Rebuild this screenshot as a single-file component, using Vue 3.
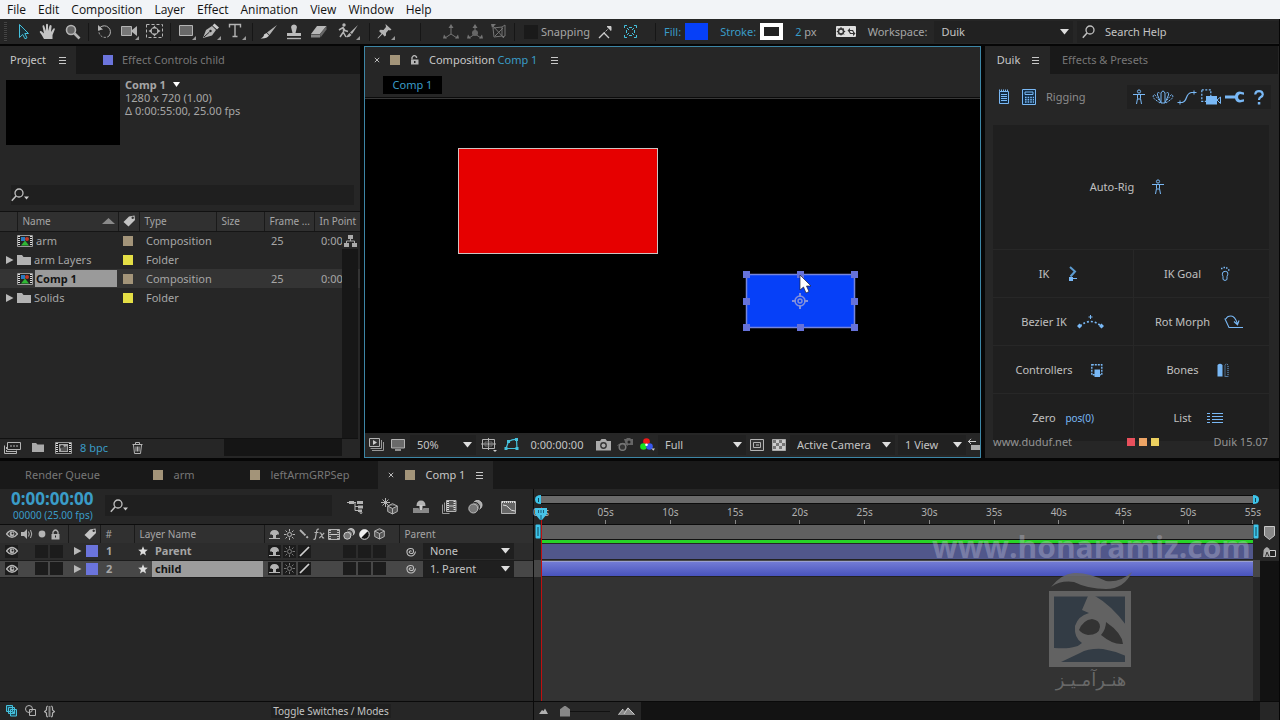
<script setup>
import { h, ref } from 'vue'

const G = '#b4b4b4'
const B = '#79b8f5'
const C = '#45c1dd'
const man = `<g fill="none" stroke="${B}"><circle cx="7" cy="2.500" r="1.600"/><path d="M1 5.500h12M5.500 5.500v4l-1 5.500M8.500 5.500v4l1 5.500M5.500 10h3"/></g>`
const eye = `<path d="M.5 5Q6 -2 11.500 5Q6 11.500.5 5z" fill="none" stroke="${G}" stroke-width="1.300"/><circle cx="6" cy="5" r="2.400" fill="${G}"/><circle cx="6.500" cy="4.500" r="1" fill="#222"/>`
const shy = `<path d="M1 5.500Q1 1 5.500 1T10 5.500zM4 5h3v5H4z" fill="${G}"/><path d="M0 9.500h11M3.500 4v2M7.500 4v2" stroke="${G}" fill="none"/>`
const cube = `<path d="M5.500.7l4.800 2.300v5.500l-4.800 2.500L.7 8.500V3zM.7 3l4.800 2.500L10.300 3M5.500 5.500V11" fill="#555" stroke="${G}"/>`
const balls = `<circle cx="8" cy="4" r="3.500" fill="#aaa" stroke="#ccc"/><circle cx="6" cy="6" r="3.500" fill="#888" stroke="#222"/><circle cx="4.300" cy="7.700" r="3.500" fill="#777" stroke="#ccc"/>`

const icons = {
  arrow: [14, 17, `<path d="M3.500 1.500v13l3.200-3 2.300 4.300 2-1-2.200-4.300h3.700z" fill="#1b3038" stroke="${C}"/>`],
  hand: [18, 17, `<path d="M5 16Q3 12 .8 9.300Q.5 7.500 2.500 8.200L5 10.500 3.500 3.500Q3.500 1.800 5 2.300L7 8V1.500Q8 .2 9 1.500V8l1.600-5.500Q12 1.300 12.600 3L12 9l2.400-3.500q1.800-.6 1.400 1L13.500 12v4z" fill="#c4c4c4"/>`],
  zoom: [16, 16, `<circle cx="6" cy="6" r="4.500" fill="#666" stroke="${G}" stroke-width="1.600"/><path d="M9.500 9.500l5 5" stroke="${G}" stroke-width="2.600"/>`],
  rotate: [15, 15, `<path d="M3 3.500a6.200 6.200 0 0 1 9 8.500" fill="none" stroke="${G}"/><path d="M12 12a6.200 6.200 0 0 1-10-6" fill="none" stroke="${G}" stroke-dasharray="2 1.500"/><path d="M1 1v5.500l5-1z" fill="${G}"/>`],
  camera: [19, 17, `<path d="M1.500 3.500h10v9h-10z" fill="#777" stroke="${G}"/><path d="M12 7l5-4v10l-5-4z" fill="${G}"/><path d="M19 13v4h-4z" fill="#999"/>`],
  panBehind: [17, 15, `<path d="M.5.5h16v13H.5z" fill="none" stroke="${G}" stroke-dasharray="3 2"/><circle cx="8.500" cy="7" r="3.500" fill="none" stroke="${G}"/><path d="M8.500 1.500l2 3h-4zM8.500 12.500l2-3h-4zM2.500 7l3-2v4zM14.500 7l-3-2v4z" fill="${G}"/>`],
  rect: [18, 17, `<path d="M1.500 2.500h13v10h-13z" fill="#696969" stroke="${G}"/><path d="M18 13v4h-4z" fill="#999"/>`],
  pen: [18, 17, `<path d="M0 15L3 7l6-4 4 4-4 5.500z" fill="${G}"/><path d="M9.500 2.500l2-2 4.500 4-2 2z" fill="#ccc"/><path d="M1 14l5.500-5" stroke="#222"/><circle cx="7.500" cy="8" r="1.200" fill="#222"/><path d="M18 13v4h-4z" fill="#999"/>`],
  type: [18, 17, `<path d="M1.500 4.500V1.500h11v3M7 2v11M4.500 13.500h5" fill="none" stroke="${G}" stroke-width="1.400"/><path d="M18 13v4h-4z" fill="#999"/>`],
  brush: [18, 16, `<path d="M17 1L9.500 11 7 8.500z" fill="${G}"/><path d="M6.500 9l2.500 2.500Q7 15 .5 14.500Q4 13 4 10.500z" fill="#ccc"/>`],
  stamp: [16, 16, `<path d="M5.500 5Q4 1 8 .5Q12 1 10.500 5L9.500 9H15v3H1V9h5.500z" fill="#bbb"/><path d="M1 14.500h14" stroke="${G}" stroke-width="1.400"/>`],
  eraser: [18, 15, `<path d="M7 2h9.500L10 10H1z" fill="#b8b8b8"/><path d="M1 10.500h9v3H1z" fill="#888"/><path d="M10 10l6.500-8v3.500l-6 8z" fill="#666"/>`],
  roto: [22, 17, `<circle cx="6" cy="2" r="1.700" fill="${G}"/><path d="M1 7l4-2.500 2 3 3 1M5.500 5v4.500L8 14M5 9.500L2 14" fill="none" stroke="${G}" stroke-width="1.500"/><path d="M20 2l-6 9-2-1.500zM11.500 10l2 2Q11 15 8 14z" fill="${G}"/><path d="M22 13v4h-4z" fill="#999"/>`],
  pin: [18, 17, `<path d="M8.500 1l6 5.500-1.500 1-1.500-.5-2.500 3v2.500L7.500 13.500 5.500 11 1 15.500.5 15 4.500 10.500 2 8l1.500-1.200 3 .2 2.500-3z" fill="${G}"/><path d="M18 13v4h-4z" fill="#999"/>`],
  axis1: [16, 16, `<path d="M8 2v8M8 10l-6 4M8 10l6 4" stroke="#747474" fill="none"/><path d="M8 0l2.500 4h-5zM0 14.500l1-4 3 4zM16 14.500l-1-4-3 4z" fill="#747474"/>`],
  axis2: [16, 16, `<path d="M8 2v8M8 10l-6 4M8 10l6 4" stroke="#747474" fill="none"/><path d="M8 0l2.500 4h-5zM0 14.500l1-4 3 4zM16 14.500l-1-4-3 4z" fill="#747474"/><circle cx="8" cy="9" r="3" fill="#666"/>`],
  axis3: [16, 16, `<path d="M2 4l9-1v9l-8 1zM1 1l12 13M11 3l3-2v11l-3 1M4 12l8-8" stroke="#747474" fill="none"/><path d="M0 0h5L1 4z" fill="#747474"/>`],
  snapA: [14, 14, `<path d="M1 13l5-5 5 5" stroke="#ccc" stroke-width="1.300" fill="none"/><path d="M6 8l4-4" stroke="#bbb" stroke-dasharray="2 1"/><path d="M9 2h4v4z" fill="#ccc"/><path d="M9 1.500h4v4" stroke="#ccc" fill="none"/>`],
  snapB: [13, 13, `<path d="M.5 3V.5H3M10 .5h2.500V3M.5 10v2.500H3M10 12.500h2.500V10M3 3l2 2M10 3L8 5M3 10l2-2M10 10L8 8M5 2.500h3M5 10.500h3M2.500 5v3M10.500 5v3" stroke="${C}" fill="none"/>`],
  gear: [20, 11, `<rect width="20" height="11" rx="1" fill="#dedede"/><circle cx="5" cy="5.500" r="2.600" fill="none" stroke="#333" stroke-width="1.600"/><path d="M5 1v9M.8 5.500h8.400M2 2.500l6 6M8 2.500l-6 6" stroke="#333" stroke-dasharray="1.500 5.500"/><path d="M14 2L11.500 4.500 14 7zM17 5l2.500 2.500L17 10z" fill="#333"/><path d="M13 4.500h4v1.500M18 7.500h-4V6" fill="none" stroke="#333"/>`],
  mag: [14, 14, `<circle cx="8" cy="5" r="4" fill="none" stroke="#c0c0c0" stroke-width="1.300"/><path d="M5 8L.8 12.800" stroke="#c0c0c0" stroke-width="1.500"/>`],
  magDrop: [19, 14, `<circle cx="8" cy="5" r="4" fill="none" stroke="#c0c0c0" stroke-width="1.300"/><path d="M5 8L.8 12.800" stroke="#c0c0c0" stroke-width="1.500"/><path d="M13 8.500h5l-2.500 3z" fill="#ccc"/>`],
  menu: [7, 8, `<path d="M0 1.500h7M0 4.500h7M0 7.500h7" stroke="#c8c8c8"/>`],
  close: [6, 6, `<path d="M.8.8l4.400 4.400M5.200.8L.8 5.200" stroke="#bbb"/>`],
  lock: [9, 10, `<path d="M2 4.500V2.500Q4 -1 6.500 2v1" fill="none" stroke="${G}" stroke-width="1.400"/><path d="M1 4.500h7.500v5H1z" fill="${G}"/><path d="M4 6h1.500v2H4z" fill="#222"/>`],
  locked: [9, 11, `<path d="M2 5V3Q4.500 -1 7 3v2" fill="none" stroke="${G}" stroke-width="1.300"/><path d="M.5 5h8v5.500h-8z" fill="${G}"/><path d="M4 6.500h1v2H4z" fill="#222"/>`],
  down: [9, 6, `<path d="M0 0h9L4.500 5.500z" fill="#ddd"/>`],
  downSmall: [7, 5, `<path d="M0 0h7L3.500 5z" fill="#fff"/>`],
  up: [13, 6, `<path d="M0 6h13L6.500 0z" fill="#8a8a8a"/>`],
  twirl: [8, 8, `<path d="M0 0l7.500 4L0 8z" fill="#b8b8b8"/>`],
  tag: [13, 12, `<path d="M6 1.500L11.500.5 12 5 5.500 11.500.5 7z" fill="#c4c4c4"/><circle cx="9.700" cy="2.800" r="1.200" fill="#333"/>`],
  comp: [16, 12, `<path d="M.5.5h15v11H.5z" fill="#222" stroke="#999"/><path d="M2 1v10M14 1v10" stroke="#ddd" stroke-width="2" stroke-dasharray="1 1"/><path d="M4 2h4v4H4z" fill="#2a7abf"/><circle cx="10" cy="4" r="2" fill="#c03a2a"/><path d="M4 10.500h8L8 5.500z" fill="#2fb835"/>`],
  folder: [14, 11, `<path d="M0 1h5l1.500 2H14v8H0z" fill="#b2b2b2"/>`],
  folderSmall: [12, 9, `<path d="M0 0h4l1.500 1.500H12V9H0z" fill="#aaa"/>`],
  flow: [13, 12, `<path d="M4 0h5v4H4zM0 8h5v4H0zM8 8h5v4H8z" fill="#aaa"/><path d="M6.500 4v2M2.500 8V6h8v2" fill="none" stroke="#aaa"/>`],
  interpret: [17, 12, `<path d="M3.500.5h13v7h-13z" fill="#222" stroke="${G}"/><path d="M.5 3.500v8h12v-3" fill="none" stroke="${G}"/><path d="M6 4h8M2.500 5v6" stroke="${G}" stroke-dasharray="2 1"/><path d="M3 9.500h9" stroke="${G}"/>`],
  newcomp: [17, 12, `<path d="M.5.5h16v11H.5z" fill="#222" stroke="#999"/><path d="M2 1v10M15 1v10" stroke="#ddd" stroke-width="2" stroke-dasharray="1 1"/><path d="M4 2h9v8H4z" fill="#aaa"/><circle cx="7" cy="5" r="2" fill="#333"/><path d="M6 9V6l6-2v5z" fill="#555"/>`],
  trash: [11, 12, `<path d="M.5 2.500h10M3.500 2V.5h4V2M1.500 3l1 8.500h6l1-8.500M4 4.500v5M5.500 4.500v5M7 4.500v5" fill="none" stroke="${G}"/>`],
  preview: [15, 13, `<path d="M3 12.500h11.500V4M1.500 10.500h11V2" fill="none" stroke="#999"/><path d="M.5.500h10v8H.5z" fill="#333" stroke="${G}"/><path d="M4 2l4 2.500L4 7z" fill="#ccc"/>`],
  monitor: [15, 12, `<path d="M.5.500h13v8.500H.5z" fill="#6a6a6a" stroke="${G}"/><path d="M4 11h6" stroke="${G}" stroke-width="1.500"/>`],
  safe: [16, 14, `<path d="M1.500 1.500h12v9h-12zM7.500 0v12M0 6h15" fill="none" stroke="${G}"/><path d="M4 4h7v4H4z" fill="none" stroke="#777"/><path d="M12 12h4l-2 2z" fill="#ccc"/>`],
  mask: [15, 13, `<path d="M2 10.500L4.500 3.500Q9 1 12.500 1.500L13 10.500z" fill="none" stroke="${C}" stroke-width="1.200"/><path d="M.5 9h3v3h-3zM11.500 9h3v3h-3zM3 2h3v3H3zM11 0h3v3h-3z" fill="${C}"/>`],
  snapshot: [15, 12, `<path d="M0 2h4l1.500-2h4L11 2h4v9.500H0z" fill="#aaa"/><circle cx="7.500" cy="6.500" r="3.400" fill="#333"/><circle cx="7.500" cy="6.500" r="2" fill="#aaa"/>`],
  showSnap: [16, 13, `<path d="M7 1h2l1-1h3l1 1h2v6H9z" fill="#666"/><circle cx="12" cy="4" r="1.500" fill="#222"/><path d="M.5 7.500Q6 3 11 7.500" fill="none" stroke="#666"/><circle cx="5.500" cy="9" r="3.300" fill="#333" stroke="#777" stroke-width="1.500"/>`],
  rgb: [15, 13, `<circle cx="6.500" cy="3.500" r="3.300" fill="#f01818"/><circle cx="3.500" cy="8.500" r="3.300" fill="#18e020"/><circle cx="9.500" cy="8.500" r="3.300" fill="#3858f0"/><circle cx="6.500" cy="6.800" r="1.300" fill="#fff"/><path d="M11.500 10.500h3.500l-1.700 2.300z" fill="#ccc"/>`],
  roi: [14, 12, `<path d="M.5.500h13v11H.5zM3.500 3.500h7v5h-7z" fill="#333" stroke="${G}"/><path d="M6 5h3v2H6z" fill="#777"/>`],
  grid: [14, 12, `<path d="M.5.500h13v11H.5z" fill="#ccc" stroke="#aaa"/><path d="M1 1h3v3H1zM7 1h3v3H7zM4 4h3v3H4zM10 4h3v3h-3zM1 7h3v3H1zM7 7h3v3H7z" fill="#777"/>`],
  pixel: [12, 14, `<path d="M0 3.500h8M3 .8L.5 3.500 3 6" fill="none" stroke="#ccc"/><path d="M3 7h9v5H3z" fill="#aaa"/>`],
  note: [12, 16, `<path d="M1.500 2.500h9v12h-9z" fill="#122c44" stroke="${B}"/><path d="M1 1.500h10" stroke="${B}" stroke-width="2" stroke-dasharray="1 1"/><path d="M3 5.500h6M3 7.500h6M3 9.500h6M3 11.500h6" stroke="${B}"/>`],
  calc: [14, 16, `<path d="M.500.500h13v15H.500z" fill="#122c44" stroke="${B}"/><path d="M3 3h8v2.500H3z" fill="none" stroke="${B}"/><path d="M3 8.500h9M3 10.800h9M3 13h9" stroke="${B}" stroke-width="1.600" stroke-dasharray="1.600 1"/>`],
  man: [14, 16, man],
  wings: [22, 15, `<g fill="none" stroke="${B}"><path d="M9 13V3q2-4 4 0v10z"/><path d="M9 13L5.500 5Q5 1.500 7.500 3M13 13l3.500-8Q17 1.500 14.500 3"/><path d="M8 13L3 9.500Q-.5 6 2.500 4.500L7 10M14 13l5-3.500Q22.500 6 19.500 4.500L15 10" stroke-dasharray="2 1"/></g>`],
  curve: [20, 15, `<path d="M3 12.500h2q3-.5 4.500-5t5-5h2" fill="none" stroke="${B}" stroke-width="1.200"/><path d="M.5 12.500h5M3 10.500v4M14 2.500h5.500M17 .5v4" stroke="${B}" fill="none"/>`],
  cam2: [20, 16, `<path d="M.8.800h9v11.500h-9z" fill="none" stroke="${B}" stroke-width="1.300" stroke-dasharray="2 1.500"/><path d="M5 7h11v8.500H5z" fill="${B}"/><path d="M16 11l3.500-3v6.500z" fill="none" stroke="${B}"/>`],
  wrench: [20, 12, `<path d="M0 4.500h10Q11 .5 15 .5l4 1v2.200l-4-.7q-2 1-2 3t2 3l4-.7v2.200l-4 1Q11 11.500 10 7.500H0z" fill="${B}"/>`],
  help: [10, 15, `<path d="M1.200 4.500Q1.500 1.200 5 1.200T8.800 4.500Q8.800 6 6.500 7.200Q5 8 5 10" fill="none" stroke="${B}" stroke-width="2.200"/><path d="M3.800 12h2.500v2.500H3.800z" fill="${B}"/>`],
  ik: [10, 16, `<path d="M2 1l5 4.500-4.500 5" fill="none" stroke="#5c9bd0" stroke-width="2"/><path d="M1 11h4v4H1z" fill="${B}"/><path d="M5 12.500h4" stroke="${B}"/>`],
  foot: [10, 16, `<path d="M3 6Q5 4.500 7.500 6q1 2-.5 4.500 1 4-2 4t-2-4Q1.500 8 3 6z" fill="none" stroke="${B}"/><path d="M1 2.500h1.500M3.500 1.500H5M6 2h1.500M8 4h1.500" stroke="${B}" stroke-width="1.500"/>`],
  bezier: [27, 14, `<path d="M3 11Q13 2 24 11" fill="none" stroke="${B}" stroke-width="1.700" stroke-dasharray="2 2"/><path d="M2.500 8.500L5 11 2.500 13.500 0 11zM24.500 8.500L27 11l-2.500 2.500L22 11z" fill="${B}"/><path d="M13.500 0v4M11.500 2h4" stroke="${B}"/>`],
  morph: [20, 14, `<path d="M19 12.500H5L.8 3.500M2 4Q3 1 7 1t6.500 8M10 6.500l3.500 3.200L15 5.500" fill="none" stroke="${B}" stroke-width="1.100"/>`],
  control: [12, 14, `<path d="M.8 1.800h10v10H.8z" fill="none" stroke="${B}" stroke-width="1.400" stroke-dasharray="2 1"/><path d="M3.500 6.500H9V14H3.500z" fill="${B}"/>`],
  bones: [12, 14, `<path d="M.5 2Q3 -.5 5.500 2v11.500h-5z" fill="${B}"/><path d="M8 13.500V2Q9.500 0 11 2v11.500z" fill="none" stroke="${B}" stroke-dasharray="1 1"/>`],
  list: [16, 10, `<path d="M0 .500h3M0 3.500h3M0 6.500h3M0 9.500h3M5 .500h11M5 3.500h11M5 6.500h11M5 9.500h11" stroke="${B}"/>`],
  tree: [17, 14, `<path d="M0 2.500h9M8 2.500v8h4M8 6.500h4" stroke="${G}" fill="none"/><path d="M2 1h5v3H2zM10 1h6v3h-6zM11 5.500h5v3h-5zM11 9.500h4v2.500h-4z" fill="${G}"/><path d="M12 12.500h4l-2 1.500z" fill="#ccc"/>`],
  draft: [17, 17, `<g transform="translate(6 5)">${cube}</g><path d="M4.500 0v9M0 4.500h9M1.500 1.500l6 6M7.500 1.500l-6 6" stroke="${G}"/>`],
  shyBig: [16, 14, `<path d="M3.500 6Q3.500.500 8 .500T12.500 6z" fill="${G}"/><path d="M6.500 5h3v5h-3z" fill="#ccc"/><path d="M0 8h5.500l1 2h3l1-2H16v5H0z" fill="#888"/>`],
  blendBig: [15, 14, `<path d="M.5 4.500v9h7M2.500 2.500v9" fill="none" stroke="#999"/><path d="M4.500.500h9.500v11H4.500z" fill="#555" stroke="${G}"/><path d="M6 1v10M12.500 1v10" stroke="#ddd" stroke-width="2" stroke-dasharray="1 1"/><path d="M7 6h5" stroke="#ccc"/>`],
  blurBig: [15, 14, `<circle cx="9.500" cy="5" r="4.500" fill="#aaa" stroke="#ccc"/><circle cx="7" cy="7" r="4.500" fill="#777" stroke="#222"/><circle cx="5.300" cy="8.500" r="4.500" fill="#777" stroke="#bbb"/>`],
  graph: [15, 14, `<path d="M.5 1.500h14v12H.5z" fill="#666" stroke="${G}"/><path d="M1 2h13" stroke="#ddd" stroke-width="2" stroke-dasharray="1 1"/><path d="M2 5q4 0 6 3t6 3" fill="none" stroke="#ddd"/>`],
  eye: [12, 10, eye],
  speaker: [12, 10, `<path d="M0 3h3l3-3v10L3 7H0z" fill="${G}"/><path d="M7.500 2.500q1.500 2.500 0 5M9.500 1q2.500 4 0 8" fill="none" stroke="${G}"/>`],
  solo: [8, 8, `<circle cx="4" cy="4" r="3.400" fill="${G}"/>`],
  shy: [11, 11, shy],
  sun: [11, 11, `<circle cx="5.500" cy="5.500" r="2" fill="none" stroke="${G}"/><path d="M5.500 0v2.500M5.500 8.500V11M0 5.500h2.500M8.500 5.500H11M1.500 1.500l1.700 1.700M7.800 7.800l1.700 1.700M9.500 1.500L7.800 3.200M3.200 7.800L1.500 9.500" stroke="${G}"/>`],
  dimSun: [11, 11, `<circle cx="5.500" cy="5.500" r="2" fill="none" stroke="#777"/><path d="M5.500 0v2.500M5.500 8.500V11M0 5.500h2.500M8.500 5.500H11M1.500 1.500l1.700 1.700M7.800 7.800l1.700 1.700M9.500 1.500L7.800 3.200M3.200 7.800L1.500 9.500" stroke="#777"/>`],
  quality: [11, 11, `<path d="M1 1l4 4" stroke="${G}" stroke-width="1.800"/><path d="M5 5l5 5" stroke="${G}" stroke-width="2" stroke-dasharray="2 1.500"/>`],
  slash: [11, 11, `<path d="M1 10l9-9" stroke="#d0d0d0" stroke-width="1.700"/>`],
  fx: [12, 12, `<path d="M6 1.200Q4.200.5 3.700 3L2.300 10.500q-.3 1.200-1.800.8M1.500 4.500h4M6.500 5q1.300-.5 1.800 1l1 3q.5 1.300 1.800.7M11.200 4.800L6.300 10.200" fill="none" stroke="${G}" stroke-width="1.200"/>`],
  film: [12, 11, `<path d="M.5.500h11v10H.5z" fill="#444" stroke="${G}"/><path d="M2 1v9M10 1v9" stroke="#ddd" stroke-width="1.500" stroke-dasharray="1 1"/><path d="M3 5.500h6" stroke="#ccc"/>`],
  balls: [12, 12, balls],
  half: [11, 11, `<circle cx="5.500" cy="5.500" r="4.800" fill="#111" stroke="#ddd"/><path d="M2 9A4.800 4.800 0 0 1 9 2z" fill="#eee"/>`],
  cube: [11, 12, cube],
  star: [10, 10, `<path d="M5 .3l1.300 3.200 3.500.3-2.700 2.200.9 3.500L5 7.600 2 9.500l.9-3.500L.2 3.800l3.500-.3z" fill="#ddd"/>`],
  whip: [11, 11, `<path d="M6.500 5.500q-1-1.500-2 0t1.500 2 2.500-2.500T5 2.500 2 6.500t4 3.500 4.500-4.500" fill="none" stroke="#c0c0c0" stroke-width="1.100"/>`],
  layersBlue: [12, 12, `<path d="M.5.500h6v6h-6zM2.500 2.500h6v6h-6zM4.500 4.500h6v6.500h-6z" fill="#1c4a58" stroke="${C}"/><circle cx="7.500" cy="7.700" r="1.300" fill="${C}"/>`],
  modes: [12, 12, `<circle cx="4" cy="4" r="3.500" fill="none" stroke="${G}"/><path d="M4.500 4.500h6v6h-6z" fill="none" stroke="${G}"/>`],
  braces: [11, 13, `<path d="M4 1Q2.500 1 2.500 3v2L.5 6.500l2 1.500v2q0 2 1.500 2M7 1q1.500 0 1.500 2v2l2 1.500-2 1.500v2q0 2-1.500 2" fill="none" stroke="${G}" stroke-width="1.200"/><path d="M4.500 1h2v11h-2z" fill="#888"/>`],
  hillS: [9, 6, `<path d="M0 6l3-4 1.500 1L6 .500 9 6z" fill="#b0b0b0"/>`],
  hillL: [17, 8, `<path d="M0 8l5-6 2 2 3-3.800L17 8z" fill="#8c8c8c"/><path d="M.5 7.500L5 2M6 7l4-6 6.500 6.500" fill="none" stroke="#ccc"/>`],
  marker: [11, 14, `<path d="M.5.500h10v9l-5 4-5-4z" fill="#888" stroke="#c8c8c8"/>`],
  compBtn: [13, 11, `<path d="M6.500 3.500h6v6h-6z" fill="#222" stroke="#ccc"/><path d="M4 0Q0 2 .5 5L0 10h8L6.500 7V2z" fill="#aaa"/><path d="M2.500 9.500L4 5l2 4.500" stroke="#333" fill="none"/>`],
  head: [12, 14, `<path d="M0 1h12v6l-5 6H5L0 7z" fill="#48c4e8"/><path d="M3.500 3v3M6 3v3M8.500 3v3M6 8v5" stroke="#1b5d78"/>`],
  capL: [6, 9, `<path d="M6 0v9Q0 9 0 4.500T6 0z" fill="#3cc4ea"/><path d="M3.500 3v4" stroke="#145"/>`],
  capR: [6, 9, `<path d="M0 0v9q6 0 6-4.500T0 0z" fill="#3cc4ea"/><path d="M2.500 3v4" stroke="#145"/>`],
  grab: [6, 15, `<rect x=".5" y=".5" width="5" height="14" rx="1" fill="#3cc4ea"/><path d="M3 3v9" stroke="#145"/>`]
}

const Icon = (props) => {
  const [w, ht, body] = icons[props.name]
  return h('svg', { width: w, height: ht, viewBox: `0 0 ${w} ${ht}`, 'aria-hidden': 'true', innerHTML: body })
}
Icon.props = ['name']

const menus = ['File', 'Edit', 'Composition', 'Layer', 'Effect', 'Animation', 'View', 'Window', 'Help']
const toolGroups = [
  ['arrow', 'hand', 'zoom'],
  ['rotate', 'camera', 'panBehind'],
  ['rect', 'pen', 'type'],
  ['brush', 'stamp', 'eraser', 'roto'],
  ['pin']
]
const items = [
  { name: 'arm', icon: 'comp', tag: 'tan', type: 'Composition', rate: '25', start: '0:00' },
  { name: 'arm Layers', icon: 'folder', tag: 'yellow', type: 'Folder', folder: true },
  { name: 'Comp 1', icon: 'comp', tag: 'tan', type: 'Composition', rate: '25', start: '0:00', selected: true },
  { name: 'Solids', icon: 'folder', tag: 'yellow', type: 'Folder', folder: true }
]
const rigTools = ['man', 'wings', 'curve', 'cam2', 'wrench', 'help']
const rigButtons = [
  { text: 'IK', icon: 'ik' },
  { text: 'IK Goal', icon: 'foot' },
  { text: 'Bezier IK', icon: 'bezier' },
  { text: 'Rot Morph', icon: 'morph' },
  { text: 'Controllers', icon: 'control' },
  { text: 'Bones', icon: 'bones' },
  { text: 'Zero', formula: 'pos(0)' },
  { text: 'List', icon: 'list' }
]
const layers = [
  { id: 1, name: 'Parent', parent: 'None' },
  { id: 2, name: 'child', parent: '1. Parent', selected: true }
]
const parents = ['None', '1. Parent']
const switches = ['shy', 'sun', 'quality', 'fx', 'film', 'balls', 'half', 'cube']
const ticks = Array.from({ length: 12 }, (_, i) => String(i * 5).padStart(2, '0') + 's')
const handles = [[381, 175], [435, 175], [489, 175], [381, 202], [489, 202], [381, 228], [435, 228], [489, 228]]
const snapping = ref(false)
</script>

<template>
  <div class="app">
    <nav class="menubar">
      <button v-for="m in menus" :key="m" type="button">{{ m }}</button>
    </nav>

    <header class="toolbar">
      <span class="grip"></span>
      <template v-for="(g, i) in toolGroups" :key="i">
        <i v-if="i" class="sep"></i>
        <button v-for="t in g" :key="t" type="button" class="tool" :class="{ wide: t === 'roto' }" :aria-label="t"><Icon :name="t" /></button>
      </template>
      <i class="sep far"></i>
      <button v-for="t in ['axis1', 'axis2', 'axis3']" :key="t" type="button" class="tool axis" :aria-label="t"><Icon :name="t" /></button>
      <i class="sep"></i>
      <label class="snap"><input v-model="snapping" type="checkbox" />Snapping</label>
      <button type="button" class="tool" aria-label="Snap edges"><Icon name="snapA" /></button>
      <button type="button" class="tool" aria-label="Snap features"><Icon name="snapB" /></button>
      <i class="sep mid"></i>
      <a href="#fill" class="blue">Fill:</a>
      <button type="button" class="swatch fill" aria-label="Fill color"></button>
      <a href="#stroke" class="blue">Stroke:</a>
      <button type="button" class="swatch stroke" aria-label="Stroke color"></button>
      <span class="px"><a href="#width" class="blue">2</a> px</span>
      <button type="button" class="tool axis" aria-label="Settings"><Icon name="gear" /></button>
      <label class="worklabel" for="ws">Workspace:</label>
      <span class="pick work"><select id="ws"><option>Duik</option></select><Icon name="down" /></span>
      <label class="help"><Icon name="mag" /><input type="text" placeholder="Search Help" aria-label="Search Help" /></label>
    </header>

    <main class="panels">
      <section class="panel project">
        <div class="tabs">
          <button type="button" class="tab on first">Project <Icon name="menu" /></button>
          <button type="button" class="tab effects"><i class="chip violet"></i>Effect Controls child</button>
        </div>
        <div class="info">
          <div class="thumb"></div>
          <div>
            <strong>Comp 1 <Icon name="downSmall" /></strong>
            <div>1280 x 720 (1.00)</div>
            <div>Δ 0:00:55:00, 25.00 fps</div>
          </div>
        </div>
        <label class="search"><Icon name="magDrop" /><input type="text" aria-label="Search project" /></label>
        <div class="tablewrap">
          <table class="items">
            <colgroup><col class="c1" /><col class="c2" /><col class="c3" /><col class="c4" /><col class="c5" /><col class="c6" /><col /></colgroup>
            <thead>
              <tr><th></th><th class="sorted"><span>Name <Icon name="up" /></span></th><th class="tagcol"><Icon name="tag" /></th><th>Type</th><th>Size</th><th>Frame ...</th><th>In Point</th></tr>
            </thead>
            <tbody>
              <tr v-for="it in items" :key="it.name" :class="{ sel: it.selected }">
                <td><Icon v-if="it.folder" name="twirl" /></td>
                <td class="nm"><span class="cell"><Icon :name="it.icon" /><span class="label">{{ it.name }}</span></span></td>
                <td><i class="chip" :class="it.tag"></i></td>
                <td>{{ it.type }}</td>
                <td></td>
                <td class="rate">{{ it.rate }}</td>
                <td>{{ it.start }}</td>
              </tr>
            </tbody>
          </table>
          <div class="vscroll"><Icon name="flow" /><i></i></div>
        </div>
        <footer class="pfoot">
          <button type="button" aria-label="Interpret footage"><Icon name="interpret" /></button>
          <button type="button" aria-label="New folder"><Icon name="folderSmall" /></button>
          <button type="button" aria-label="New composition"><Icon name="newcomp" /></button>
          <button type="button" class="blue bpc">8 bpc</button>
          <button type="button" aria-label="Delete"><Icon name="trash" /></button>
          <span class="hscroll"><i></i></span>
        </footer>
      </section>

      <section class="panel viewer">
        <div class="vtitle">
          <button type="button" aria-label="Close"><Icon name="close" /></button>
          <i class="chip tan"></i><Icon name="lock" />
          <span class="ttl">Composition <b>Comp 1</b></span><Icon name="menu" />
        </div>
        <div class="crumbs"><button type="button">Comp 1</button></div>
        <svg class="canvas" role="img" aria-label="Composition canvas">
          <rect x="93.500" y="49.500" width="199" height="105" fill="#e60000" stroke="#cfc3c3" />
          <rect x="381.500" y="175.500" width="108" height="53" fill="#0640f8" stroke="#7585dc" stroke-width="1.500" />
          <rect v-for="(p, i) in handles" :key="i" :x="p[0] - 3" :y="p[1] - 3" width="7" height="7" fill="#6672da" />
          <g fill="none" stroke="#8290dc" stroke-width="1.500">
            <circle cx="435" cy="202" r="5" /><circle cx="435" cy="202" r="2" />
            <path d="M435 194v4M435 206v4M427 202h4M439 202h4" stroke-width="2" />
          </g>
          <path d="M435 176v15l3.500-3 2.500 6 3-1.500-2.500-5.500h4.500z" fill="#fff" stroke="#223" stroke-width=".7" />
        </svg>
        <footer class="vfoot">
          <button type="button" aria-label="Preview"><Icon name="preview" /></button>
          <button type="button" aria-label="Monitor"><Icon name="monitor" /></button>
          <span class="pick zoom"><select aria-label="Magnification"><option>50%</option></select><Icon name="down" /></span>
          <button type="button" aria-label="Guides"><Icon name="safe" /></button>
          <button type="button" aria-label="Masks"><Icon name="mask" /></button>
          <button type="button" class="time">0:00:00:00</button>
          <button type="button" aria-label="Snapshot"><Icon name="snapshot" /></button>
          <button type="button" aria-label="Show snapshot"><Icon name="showSnap" /></button>
          <button type="button" aria-label="Channels"><Icon name="rgb" /></button>
          <span class="pick res"><select aria-label="Resolution"><option>Full</option></select><Icon name="down" /></span>
          <button type="button" aria-label="Region"><Icon name="roi" /></button>
          <button type="button" aria-label="Transparency"><Icon name="grid" /></button>
          <span class="pick cam"><select aria-label="Camera"><option>Active Camera</option></select><Icon name="down" /></span>
          <span class="pick view"><select aria-label="Views"><option>1 View</option></select><Icon name="down" /></span>
          <button type="button" class="last" aria-label="Pixel aspect"><Icon name="pixel" /></button>
        </footer>
      </section>

      <section class="panel duik">
        <div class="tabs">
          <button type="button" class="tab on duiktab">Duik <Icon name="menu" /></button>
          <button type="button" class="tab presets">Effects &amp; Presets</button>
        </div>
        <div class="rigbar">
          <button type="button" aria-label="Notes"><Icon name="note" /></button>
          <button type="button" aria-label="Calculator"><Icon name="calc" /></button>
          <span>Rigging</span>
          <div class="righticons"><button v-for="t in rigTools" :key="t" type="button" :aria-label="t"><Icon :name="t" /></button></div>
        </div>
        <div class="rigs">
          <button type="button" class="auto">Auto-Rig <span class="ic"><Icon name="man" /></span></button>
          <button v-for="b in rigButtons" :key="b.text" type="button">
            {{ b.text }} <span class="ic"><Icon v-if="b.icon" :name="b.icon" /><template v-else>{{ b.formula }}</template></span>
          </button>
        </div>
        <footer class="dfoot"><a href="#site">www.duduf.net</a><span class="dots"><i></i><i></i><i></i></span><span>Duik 15.07</span></footer>
      </section>
    </main>

    <section class="timeline">
      <div class="tabs">
        <button type="button" class="tab t1">Render Queue</button>
        <button type="button" class="tab t2"><i class="chip tan"></i>arm</button>
        <button type="button" class="tab t3"><i class="chip tan"></i>leftArmGRPSep</button>
        <button type="button" class="tab on t4"><Icon name="close" /><i class="chip tan"></i>Comp 1 <Icon name="menu" /></button>
      </div>
      <div class="tbody">
        <div class="left">
          <div class="thead">
            <div class="tc"><strong>0:00:00:00</strong><span>00000 (25.00 fps)</span></div>
            <label class="search"><Icon name="magDrop" /><input type="text" aria-label="Search layers" /></label>
            <div class="ticons">
              <button v-for="t in ['tree', 'draft', 'shyBig', 'blendBig', 'blurBig', 'graph']" :key="t" type="button" :class="t" :aria-label="t"><Icon :name="t" /></button>
            </div>
          </div>
          <table class="layers">
            <colgroup><col class="l1" /><col class="l2" /><col class="l3" /><col class="l4" /><col class="l5" /><col class="l6" /><col /></colgroup>
            <thead>
              <tr>
                <th><span class="av"><Icon name="eye" /><Icon name="speaker" /><Icon name="solo" /><Icon name="locked" /></span></th>
                <th class="tagh"><Icon name="tag" /></th><th>#</th><th class="lnh">Layer Name</th>
                <th><span class="sw"><i v-for="s in switches" :key="s"><Icon :name="s" /></i></span></th>
                <th class="ph" colspan="2">Parent</th>
              </tr>
            </thead>
            <tbody>
              <tr v-for="l in layers" :key="l.id" :class="{ sel: l.selected }">
                <td><span class="av rowav"><i class="box"><Icon name="eye" /></i><i></i><i class="box"></i><i class="box"></i></span></td>
                <td><span class="tw"><Icon name="twirl" /><i class="chip violet"></i></span></td>
                <td><b>{{ l.id }}</b></td>
                <td><span class="ln"><Icon name="star" /><b>{{ l.name }}</b></span></td>
                <td><span class="sw"><i class="box"><Icon name="shy" /></i><i class="box"><Icon name="dimSun" /></i><i class="box"><Icon name="slash" /></i><i></i><i></i><i class="box"></i><i class="box"></i><i class="box"></i></span></td>
                <td class="wh"><Icon name="whip" /></td>
                <td><span class="pick par"><select :aria-label="'Parent of ' + l.name"><option v-for="p in parents" :key="p" :selected="p === l.parent">{{ p }}</option></select><Icon name="down" /></span></td>
              </tr>
            </tbody>
          </table>
          <div class="lfill"></div>
          <footer class="lfoot">
            <Icon name="layersBlue" /><Icon name="modes" /><Icon name="braces" />
            <button type="button">Toggle Switches / Modes</button>
          </footer>
        </div>
        <div class="right">
          <div class="lanes">
            <div class="nav"><Icon name="capL" /><span></span><Icon name="capR" /></div>
            <div class="ruler"><span v-for="t in ticks" :key="t">{{ t }}</span></div>
            <div class="work"><Icon name="grab" /><span></span><Icon name="grab" /></div>
            <div class="green"></div>
            <div class="lane"><div class="bar one"></div></div>
            <div class="lane sel"><div class="bar two"></div></div>
            <div class="area"></div>
            <div class="playhead"><Icon name="head" /></div>
            <div class="mark">
              <div class="url">www.honaramiz.com</div>
              <svg class="logo" width="84" height="96" viewBox="0 0 84 96" aria-hidden="true">
                <path d="M2 15Q12 2 25 1t32 8q14 2 26-9-8 17-26 17T25 10Q12 8 2 15z" fill="#686868" />
                <path d="M0 19h82v76H0z" fill="#686868" />
                <path d="M5 24.500h71V90H5z" fill="#343e48" />
                <path d="M39 24h7Q62 33 77 53v31Q66 79 54 77 40 76 31 81L12 90H0V76h5q14 1 20-1 5-1 8-4-8-5-7-17 3-10 14-13l-7-3z" fill="#686868" />
                <path d="M30 58q4-10 13-11 8 1 8 8-1 8-12 8-6-1-9-5zM57 50q16 11 17 22-10 1-22-9 5-6 5-13z" fill="#343434" />
              </svg>
              <div class="fa" lang="fa" dir="rtl">هنـرآمـیـز</div>
            </div>
          </div>
          <div class="side">
            <div class="sidetop"><Icon name="marker" /><Icon name="compBtn" /></div>
            <div class="track"></div>
          </div>
          <footer class="rfoot">
            <div class="slider"><Icon name="hillS" /><input type="range" min="0" max="100" value="0" aria-label="Timeline zoom" /><Icon name="hillL" /></div>
            <span></span>
          </footer>
        </div>
      </div>
    </section>
  </div>
</template>

<style>
body { margin: 0; background: #000; }
</style>

<style scoped>
* { box-sizing: border-box; }
.app { display: flex; flex-direction: column; min-height: 100vh; background: #060606; padding-right: 1px; overflow: hidden; color: #a6a6a6; font: 11px/14px "Noto Sans", "Open Sans", sans-serif; }
.app button, .app input, .app select { font: inherit; color: inherit; background: none; border: 0; margin: 0; padding: 0; outline: 0; border-radius: 0; }
.app button { display: flex; align-items: center; justify-content: center; white-space: nowrap; }
svg { display: block; flex: none; }
i { font-style: normal; flex: none; }
a { color: inherit; text-decoration: none; }
.blue, .app button.blue { color: #3a9cc8; }
.menubar { display: flex; gap: 12px; height: 19px; padding-left: 7px; margin-right: -1px; background: #f2f4f7; color: #111; font: 12px/18px "Open Sans", "Noto Sans", sans-serif; }

.toolbar { display: flex; align-items: center; height: 25px; background: #262626; padding-left: 4px; }
.grip { width: 3px; height: 20px; margin-right: 3px; background: repeating-linear-gradient(#444 0 1px, #222 1px 2px); }
.tool { width: 25px; height: 25px; flex: none; }
.tool.wide { width: 35px; }
.tool.axis { width: 24px; }
.sep { width: 1px; height: 18px; margin: 0 3px; background: #161616; }
.sep.far { margin: 0 18px 0 22px; }
.sep.mid { margin: 0 8px 0 12px; }
.snap { display: flex; align-items: center; gap: 3px; padding-left: 6px; margin-right: 3px; }
.app .snap input { appearance: none; width: 14px; height: 14px; background: #1a1a1a; }
.swatch { width: 23px; height: 17px; flex: none; }
.app .swatch.fill { background: #0640f8; margin: 0 12px 0 4px; }
.app .swatch.stroke { border: 4px solid #fff; background: #222; margin: 0 12px 0 4px; }
.px { margin-right: 17px; }
.worklabel { margin: 0 7px 0 10px; }
.pick { display: flex; align-items: center; position: relative; color: #c4c4c4; background: #212121; height: 18px; }
.app .pick select { appearance: none; width: 100%; height: 100%; padding-left: 7px; }
.app .pick option { background: #222; }
.pick svg { position: absolute; right: 4px; pointer-events: none; }
.work.pick { flex: 1; height: 22px; }
.help { display: flex; align-items: center; gap: 9px; width: 202px; height: 22px; padding-left: 5px; margin-left: 4px; background: #212121; }
.help input { min-width: 0; }
.help input::placeholder { color: #c4c4c4; opacity: 1; }

.panels { display: grid; grid-template-columns: minmax(0, 360fr) minmax(0, 617fr) minmax(0, 294fr); gap: 4px; margin: 2px 0 3px; min-height: 412px; }
.panel { background: #262626; display: flex; flex-direction: column; min-width: 0; overflow: hidden; }
.tabs { display: flex; height: 28px; background: #191919; flex: none; color: #777; }
.app .tab.on { background: #262626; color: #c8c8c8; }
.chip { display: block; width: 10px; height: 10px; background: #a39479; }
.chip.yellow { background: #e4de45; }
.chip.violet { background: #6b74dc; }
.app .tab.first { width: 76px; gap: 13px; }
.app .tab.effects { padding-left: 27px; gap: 9px; }
.info { display: flex; gap: 5px; padding: 4px 6px 0; line-height: 13px; }
.info strong { display: flex; align-items: center; gap: 7px; }
.thumb { width: 114px; height: 65px; background: #000; margin: 2px 0 40px; }
.search { display: flex; align-items: center; background: #1f1f1f; min-width: 0; }
.search input { flex: 1; min-width: 0; }
.project .search { height: 20px; margin: 0 6px 6px 11px; }
.tablewrap { position: relative; flex: 1; border-top: 1px solid #111; }
table { border-collapse: collapse; table-layout: fixed; width: 100%; }
th, td { padding: 0; text-align: left; font-weight: inherit; white-space: nowrap; overflow: hidden; }
.items th { height: 19px; background: #303030; border-bottom: 1px solid #151515; font-size: 10px; }
.items th + th { border-left: 1px solid #1a1a1a; padding-left: 5px; }
.items th.tagcol { padding-left: 4px; }
.items th span { display: flex; justify-content: space-between; align-items: center; padding-right: 3px; }
.items td { height: 19px; padding-left: 7px; }
.items td:first-child { padding-left: 6px; }
.items td.nm { padding-left: 0; }
.items tr.sel { background: #343434; }
.items td:nth-child(3) { padding-left: 5px; }
.cell { display: flex; align-items: center; gap: 2px; height: 17px; }
.cell .label { flex: 1; line-height: 17px; margin-right: 1px; padding-left: 1px; }
.sel .cell .label { background: #9a9a9a; color: #141414; font-weight: 700; }
.c1 { width: 17px; } .c2 { width: 101px; } .c3 { width: 21px; } .c4 { width: 77px; } .c5 { width: 48px; } .c6 { width: 50px; }
.vscroll { position: absolute; right: 2px; top: 20px; bottom: 0; width: 16px; background: #262626; display: flex; flex-direction: column; align-items: center; }
.vscroll svg { margin: 3px 0 2px; }
.vscroll i { flex: 1; width: 100%; background: #171717; }
.pfoot { display: flex; align-items: center; height: 20px; border-top: 1px solid #111; padding: 0 0 2px 4px; margin-right: 2px; gap: 11px; }
.pfoot .bpc { margin-left: -3px; margin-right: 13px; }
.hscroll { flex: 1; height: 17px; background: #151515; margin-right: 16px; }
.hscroll i { display: block; width: 70px; height: 100%; background: #262626; }

.viewer { border: 1px solid #3d86a6; }
.vtitle { display: flex; align-items: center; height: 26px; padding-left: 9px; gap: 10px; color: #c8c8c8; }
.vtitle .ttl { padding-right: 4px; }
.vtitle b { font-weight: 400; color: #3a9cc8; }
.crumbs { height: 25px; padding: 3px 18px 0; border-bottom: 1px solid #0b0b0b; }
.app .crumbs button { width: 59px; height: 18px; background: #000; color: #3a9cc8; }
.canvas { width: 100%; flex: 1 1 335px; height: auto; background: #000; border-top: 1px solid #383838; overflow: hidden; }
.vfoot { display: flex; align-items: center; height: 24px; padding-bottom: 1px; color: #c4c4c4; }
.vfoot button { flex: none; width: 22px; height: 22px; }
.vfoot .zoom { width: 66px; margin: 0 2px 0 1px; }
.vfoot .time { width: 70px; }
.vfoot .res { flex: 1; }
.vfoot .cam { width: 105px; margin-right: 3px; }
.vfoot .view { width: 68px; }
.vfoot .last { width: 14px; justify-content: flex-end; }
.vfoot .pick { height: 20px; }

.duik { padding: 0 1px; }
.app .tab.duiktab { width: 64px; gap: 12px; }
.app .tab.presets { padding-left: 12px; }
.rigbar { display: flex; align-items: center; gap: 12px; height: 46px; padding: 0 7px 0 12px; }
.rigbar > span { color: #8c8c8c; margin-left: -2px; }
.righticons { margin-left: auto; display: flex; }
.app .righticons button { width: 24px; height: 24px; background: #202020; }
.rigs { flex: 1; display: grid; grid-template-columns: 140fr 135fr; grid-template-rows: minmax(124px, 1fr) repeat(4, 47px); gap: 1px; margin: 5px 9px 0 7px; background: #272727; color: #c0c0c0; }
.app .rigs button { background: #1f1f1f; gap: 10px; }
.rigs .auto { grid-column: 1 / 3; }
.ic { width: 28px; display: flex; justify-content: center; color: #79b8f5; font-size: 10px; }
.dfoot { display: flex; justify-content: space-between; align-items: center; height: 16px; margin: -7px 10px 8px 7px; color: #949494; position: relative; }
.dots { display: flex; gap: 4px; }
.dots i { width: 8px; height: 8px; background: #e8505c; }
.dots i:nth-child(2) { background: #eda465; }
.dots i:nth-child(3) { background: #ecd05f; }

.timeline { flex: 1; display: flex; flex-direction: column; background: #262626; }
.app .t1 { width: 125px; }
.app .t2 { width: 97px; gap: 11px; }
.app .t3 { width: 156px; gap: 10px; }
.app .t4 { width: 115px; gap: 11px; }
.tbody { flex: 1; display: grid; grid-template-columns: minmax(0, 534fr) minmax(0, 745fr); }
.left { display: flex; flex-direction: column; border-right: 1px solid #0a0a0a; }
.thead { display: flex; height: 36px; border-bottom: 1px solid #0c0c0c; padding-left: 11px; }
.tc { width: 98px; color: #3a9cc8; }
.tc strong { display: block; font: 700 17px/20px "Noto Sans", sans-serif; }
.tc span { display: block; font-size: 10px; line-height: 12px; padding-left: 2px; }
.left .search { flex: 1; height: 21px; margin: 6px 6px 0 -4px; padding-left: 5px; }
.ticons { display: flex; align-items: center; width: 195px; }
.ticons button { width: 34px; }
.ticons .shyBig { width: 30px; }
.ticons .blendBig, .ticons .blurBig { width: 26px; }
.ticons .graph { width: 40px; }
.layers th { height: 18px; background: #303030; font-size: 10px; }
.layers th + th { border-left: 1px solid #1a1a1a; }
.layers th:nth-child(3), .layers th:nth-child(4) { padding-left: 5px; }
.layers th.ph { padding-left: 5px; }
.layers td { height: 17px; background: #2c2c2c; border-bottom: 1px solid #1c1c1c; }
.layers tr.sel td { background: #474747; }
.layers b { line-height: 16px; }
.layers td:nth-child(3) { padding-left: 6px; }
.l1 { width: 68px; } .l2 { width: 32px; } .l3 { width: 34px; } .l4 { width: 130px; } .l5 { width: 135px; } .l6 { width: 24px; }
.tagh svg { margin-left: 15px; }
.av { display: flex; align-items: center; gap: 3px; padding-left: 6px; }
.av svg:nth-child(3) { margin: 0 2px; }
.rowav i { width: 13px; height: 13px; }
.rowav { gap: 2px; padding-left: 5px; }
.box { background: #1c1c1c; display: flex; align-items: center; justify-content: center; }
.sw { display: flex; gap: 2px; padding-left: 3px; }
.sw i { width: 13px; height: 13px; display: flex; align-items: center; justify-content: center; }
.layers td .sw { padding-left: 4px; }
.tw { display: flex; align-items: center; gap: 4px; padding-left: 6px; }
.tw .chip { width: 12px; height: 12px; }
.ln { display: flex; align-items: center; gap: 4px; padding: 0 1px 0 4px; }
.ln b { flex: 1; padding-left: 3px; }
.sel .ln b { background: #9c9c9c; color: #151515; }
.wh svg { margin-left: 6px; }
.pick.par { width: 91px; height: 16px; background: #1f1f1f; }
.lfill { flex: 1; }
.lfoot { display: flex; align-items: center; gap: 7px; height: 19px; padding-left: 6px; border-top: 1px solid #0a0a0a; color: #c4c4c4; }
.app .lfoot button { width: 120px; margin-left: auto; margin-right: 142px; background: #202020; font-size: 10px; }

.right { display: grid; grid-template-columns: 1fr 19px; grid-template-rows: 1fr 19px; }
.lanes { display: flex; flex-direction: column; position: relative; padding: 6px 7px 0; }
.nav { display: flex; height: 9px; margin: 0 -6px; }
.nav span { flex: 1; background: #6a6a6a; border: solid #0c0c0c; border-width: 1px 0; }
.ruler { display: flex; height: 20px; font-size: 10px; line-height: 16px; color: #b0b0b0; }
.ruler span { flex: 0 0 calc(100% / 11); text-align: center; background: linear-gradient(#888, #888) 50% 100% / 1px 4px no-repeat; }
.ruler span:first-child { margin-left: calc(-100% / 22); }
.lanes .work { display: flex; height: 16px; margin: 0 -6px; }
.lanes .work span { flex: 1; background: #606060; border-top: 1px solid #0c0c0c; border-bottom: 1px solid #111; }
.green { height: 3px; background: #27d427; }
.lane { height: 17px; padding-top: 1px; }
.lane.sel { margin: 0 -7px; padding: 1px 7px 0; background: #474747; }
.bar { height: 16px; border-bottom: 1px solid #222; }
.bar.one { background: #51578b; }
.bar.two { background: linear-gradient(#727bd4, #4853bd); border-top: 1px solid #9aa0d0; }
.area { flex: 1; background: #333; }
.playhead { position: absolute; left: 7px; top: 18px; bottom: 0; width: 1px; background: #c01010; }
.playhead svg { margin-left: -6px; }
.side { display: flex; flex-direction: column; }
.sidetop { height: 72px; padding: 37px 3px 0; display: flex; flex-direction: column; align-items: center; gap: 7px; }
.track { flex: 1; background: #121212; }
.rfoot { grid-column: 1 / 3; display: flex; border-top: 1px solid #0a0a0a; }
.rfoot > span { flex: 1; background: #131313; margin-right: 19px; }
.slider { display: flex; align-items: center; gap: 8px; width: 107px; padding-left: 5px; }
.app .slider input { appearance: none; flex: 1; min-width: 0; margin-left: 4px; height: 12px; background: linear-gradient(#111, #111) 0 50% / 100% 1px no-repeat; }
.slider svg:last-child { margin-right: 6px; }
.slider input::-webkit-slider-thumb { appearance: none; width: 10px; height: 11px; background: #888; clip-path: polygon(0 35%, 50% 0, 100% 35%, 100% 100%, 0 100%); }
.mark { position: absolute; right: 6px; top: 38px; width: 322px; pointer-events: none; opacity: .9; }
.url { font: 700 30px/40px "Open Sans", sans-serif; color: rgba(200, 200, 220, .38); white-space: nowrap; }
.logo { margin: 5px 0 0 117px; }
.fa { width: 84px; margin-left: 117px; text-align: center; font: 18px/24px "DejaVu Sans", sans-serif; color: #6e6e6e; white-space: nowrap; }
</style>
